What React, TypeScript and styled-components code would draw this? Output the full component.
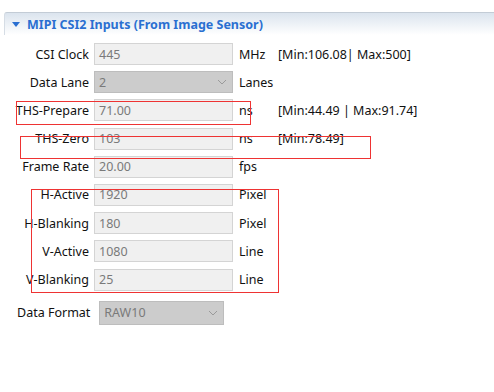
import React from 'react';
import styled, { createGlobalStyle } from 'styled-components';

const GlobalStyle = createGlobalStyle`
  body {
    margin: 0;
    background: #ffffff;
    font-family: "Noto Sans", "Liberation Sans", sans-serif;
  }
`;

const Page = styled.div`
  position: relative;
  width: 494px;
  height: 392px;
  padding-top: 12px;
  box-sizing: border-box;
  overflow: hidden;
`;

const Section = styled.div`
  margin-left: 4px;
`;

const SectionHeader = styled.div`
  display: flex;
  align-items: center;
  height: 22px;
  padding-left: 7px;
  border-top: 1px solid #c3ccd6;
  border-left: 1px solid #d6dde5;
  border-top-left-radius: 3px;
  background: linear-gradient(#dbe4ee, #ffffff);
  color: #2a6fd1;
  font-size: 12.5px;
  font-weight: bold;
`;

const Caret = styled.span`
  width: 0;
  height: 0;
  border-left: 4px solid transparent;
  border-right: 4px solid transparent;
  border-top: 5px solid #2a6fd1;
  margin-right: 7px;
`;

const Form = styled.div`
  display: grid;
  grid-template-columns: 85px 139px 35px auto;
  column-gap: 5px;
  row-gap: 6.2px;
  margin-top: 8px;
  font-size: 12.5px;
  color: #111;
`;

const Label = styled.div`
  display: flex;
  align-items: center;
  justify-content: flex-end;
  height: 22px;
  white-space: nowrap;
`;

const Field = styled.div<{ $select?: boolean }>`
  display: flex;
  align-items: center;
  justify-content: space-between;
  height: 22px;
  box-sizing: border-box;
  padding: 0 5px 0 4px;
  border: 1px solid ${p => (p.$select ? '#bdbdbd' : '#d4d4d4')};
  background: ${p => (p.$select ? '#cccccc' : '#f0f0f0')};
  color: #7a7a7a;
`;

const Unit = styled.div`
  display: flex;
  align-items: center;
  height: 22px;
  margin-left: 1px;
`;

const Range = styled.div`
  display: flex;
  align-items: center;
  height: 22px;
  white-space: nowrap;
`;

const FormatRow = styled.div`
  display: flex;
  align-items: center;
  margin-top: 10px;
  padding-left: 13px;
  gap: 9px;
  font-size: 12.5px;
  color: #111;
`;

const FormatSelect = styled(Field)`
  width: 125px;
  height: 24px;
  padding-left: 4px;
`;

const Mark = styled.div<{ $x: number; $y: number; $w: number; $h: number }>`
  position: absolute;
  left: ${p => p.$x}px;
  top: ${p => p.$y}px;
  width: ${p => p.$w}px;
  height: ${p => p.$h}px;
  border: 1px solid #ee3333;
  box-sizing: border-box;
  pointer-events: none;
`;

const Chevron = () => (
  <svg width="10" height="6" viewBox="0 0 10 6">
    <path d="M1 1l4 4 4-4" fill="none" stroke="#9a9a9a" strokeWidth="1" />
  </svg>
);

type Row = { label: string; value: string; unit: string; range?: string; select?: boolean };

const rows: Row[] = [
  { label: 'CSI Clock', value: '445', unit: 'MHz', range: '[Min:106.08| Max:500]' },
  { label: 'Data Lane', value: '2', unit: 'Lanes', select: true },
  { label: 'THS-Prepare', value: '71.00', unit: 'ns', range: '[Min:44.49 | Max:91.74]' },
  { label: 'THS-Zero', value: '103', unit: 'ns', range: '[Min:78.49]' },
  { label: 'Frame Rate', value: '20.00', unit: 'fps' },
  { label: 'H-Active', value: '1920', unit: 'Pixel' },
  { label: 'H-Blanking', value: '180', unit: 'Pixel' },
  { label: 'V-Active', value: '1080', unit: 'Line' },
  { label: 'V-Blanking', value: '25', unit: 'Line' },
];

export default function App() {
  return (
    <Page>
      <GlobalStyle />
      <Section>
        <SectionHeader>
          <Caret />
          MIPI CSI2 Inputs (From Image Sensor)
        </SectionHeader>
        <Form>
          {rows.map(r => (
            <React.Fragment key={r.label}>
              <Label>{r.label}</Label>
              <Field $select={r.select}>
                <span>{r.value}</span>
                {r.select && <Chevron />}
              </Field>
              <Unit>{r.unit}</Unit>
              <Range>{r.range}</Range>
            </React.Fragment>
          ))}
        </Form>
        <FormatRow>
          <span>Data Format</span>
          <FormatSelect $select>
            <span>RAW10</span>
            <Chevron />
          </FormatSelect>
        </FormatRow>
      </Section>
      <Mark $x={16} $y={101} $w={235} $h={24} />
      <Mark $x={20} $y={136} $w={351} $h={23} />
      <Mark $x={31} $y={189} $w={248} $h={104} />
    </Page>
  );
}
